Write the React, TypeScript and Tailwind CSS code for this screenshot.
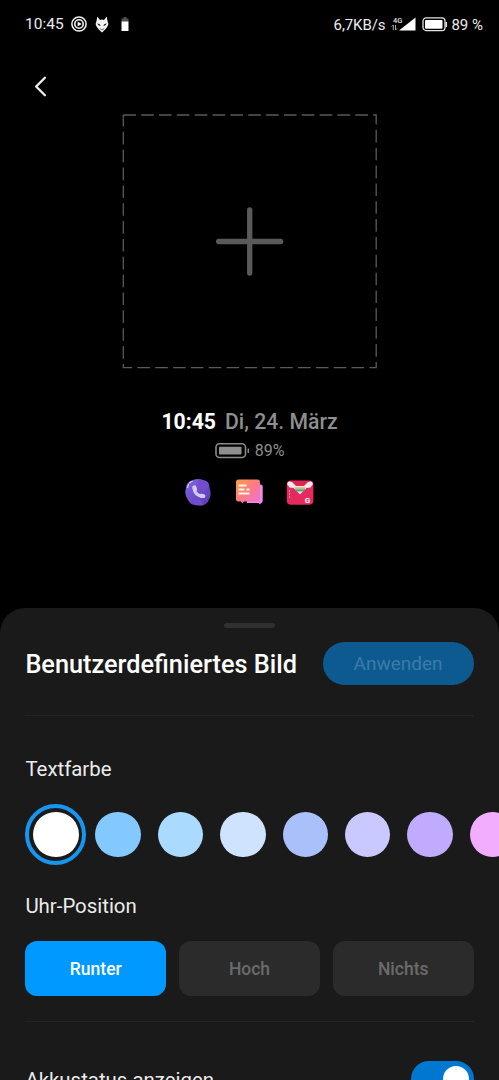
import React from "react";
import { ChevronLeft } from "lucide-react";

const colors = [
  "bg-[#83c9ff]",
  "bg-[#aadbff]",
  "bg-[#cfe3ff]",
  "bg-[#a9c0fb]",
  "bg-[#c9c8ff]",
  "bg-[#c0abfe]",
  "bg-[#f3adfe]",
];

const StatusBar = () => {
  return (
    <div className="flex h-12 items-center justify-between pl-[25px] pr-[16px] text-[15px] text-[#ececec]">
      <div className="flex items-center">
        <span className="w-[39px] pt-[2px] text-[15.500px]">10:45</span>
        <svg className="ml-[7px]" width="16" height="16" viewBox="0 0 16 16" fill="none" stroke="#f4f4f4">
          <circle cx="8" cy="8" r="7.1" strokeWidth="1.5" />
          <circle cx="8" cy="8" r="4.2" strokeWidth="1.6" />
          <path d="M6.6 5.5v5L10.7 8z" fill="#f4f4f4" stroke="none" />
        </svg>
        <svg className="ml-[8px]" width="14" height="17" viewBox="0 0 14 17">
          <path d="M2.300 .5 5 4Q7 3.200 9 4L11.700 .5 12.500 5 13.400 8Q12.500 12 7 16.500 1.500 12 .6 8L1.500 5z" fill="#f4f4f4" />
          <path d="M2.200 7.200Q5.100 7.600 5.900 10.300 3.200 10 2.200 7.200zM11.800 7.200Q8.900 7.600 8.100 10.300 10.800 10 11.800 7.200z" fill="#000" />
          <path d="M4.800 12.500 7 14 9.200 12.500" fill="none" stroke="#000" strokeWidth=".6" />
        </svg>
        <svg className="ml-[12px]" width="8" height="14" viewBox="0 0 8 14">
          <path d="M2.500 0h3v1.500H7.500V5H.5V1.500h2z" fill="#505050" />
          <path d="M.5 4.500h7V14h-7z" fill="#fff" />
        </svg>
      </div>
      <div className="flex items-center">
        <span className="pt-[2px] tracking-[-0.1px]">6,7KB/s</span>
        <svg className="ml-[6px]" width="25" height="16" viewBox="0 0 25 16">
          <text x="2" y="6.500" fontSize="7.500" fontFamily="Roboto" fontWeight="500" fill="#e0e0e0">4G</text>
          <path d="M2.300 14V9M.8 10.500 2.300 9M4.500 9v5M4.500 14 6 12.500" stroke="#aaa" strokeWidth="1" fill="none" />
          <path d="M24.500 1.500V14.500H8z" fill="#fff" />
        </svg>
        <svg className="ml-[6px]" width="26" height="15" viewBox="0 0 26 15">
          <rect x="1" y=".9" width="22" height="12.700" rx="3.200" fill="none" stroke="#e4e4e4" strokeWidth="1.300" />
          <rect x="3" y="3" width="17.500" height="8.700" rx="1" fill="#fff" />
          <path d="M24.300 5v5" stroke="#e4e4e4" strokeWidth="1.500" />
        </svg>
        <span className="ml-[3px] pt-[2px]">89 %</span>
      </div>
    </div>
  );
};

const ImagePicker = () => {
  return (
    <div className="flex justify-center">
      <svg width="256" height="256" viewBox="0 0 256 256" fill="none">
        <path d="M1.300 2H254.200V254.700H1.300V2" stroke="#5a5a5a" strokeWidth="1.300" strokeDasharray="12.600 5.250" />
        <path d="M127.700 97v63M96.700 128.500h62" stroke="#5a5a5a" strokeWidth="5.300" strokeLinecap="round" />
      </svg>
    </div>
  );
};

const AppIcons = () => {
  return (
    <div className="mt-[16px] flex justify-center gap-[23px] pr-[1px]">
      <svg width="28" height="28" viewBox="0 0 28 28">
        <defs>
          <linearGradient id="phone" x1="0" y1="0" x2="1" y2="1">
            <stop stopColor="#8067df" />
            <stop offset="1" stopColor="#5a38b3" />
          </linearGradient>
        </defs>
        <path d="M8 2.500Q14-.2 19 2 26 3 25.500 10 28 17 25 21.500 23 28 15 27.500 6 28 3.500 21 0 16 2 10 2 4 8 2.500z" fill="url(#phone)" />
        <path d="M14 2Q23 1 25 8L20 13 14 10zM10 21l7 1 2 5Q13 28 8 25z" fill="#744cce" />
        <path d="M3.500 10Q4 4.500 9 3" stroke="#cfc3ff" strokeWidth="1.300" fill="none" strokeDasharray="4 1" />
        <path d="M10.500 10Q10 13.500 12.800 16 15.500 18.500 19 18" stroke="#d3c8f7" strokeWidth="3.200" strokeLinecap="round" fill="none" />
        <path d="M10.300 9.500 11 11.500M17 17.800 19.300 18" stroke="#d3c8f7" strokeWidth="4.200" strokeLinecap="round" />
      </svg>
      <svg width="28" height="28" viewBox="0 0 28 28">
        <defs>
          <linearGradient id="message" x1="0" y1="0" x2="1" y2="1">
            <stop stopColor="#ff9c40" />
            <stop offset=".5" stopColor="#fb7b85" />
            <stop offset="1" stopColor="#ef70de" />
          </linearGradient>
        </defs>
        <path d="M12 6.500h13.500Q27.700 6.500 27.700 8.500V23Q27.700 25 26 25l-1 1.500-1.500-1.500H12z" fill="#ed8be6" />
        <path d="M3.500 1.500H22.500Q25 1.500 25 4V21Q25 23.500 22.500 23.500H9L7.500 25.500 6 23.500H3.500Q1 23.500 1 21V4Q1 1.500 3.500 1.500z" fill="url(#message)" />
        <path d="M3.500 7.500h8M3.500 11.500h6M11.500 11.500h3M3.500 15.500h11" stroke="#fff5e8" strokeWidth="2" />
      </svg>
      <svg width="28" height="28" viewBox="0 0 28 28">
        <rect x=".8" y="2.500" width="26.600" height="24" rx="4" fill="#e02458" />
        <path d="M1 7 14 17 27 7V22Q27 26.500 23 26.500H5Q1 26.500 1 22z" fill="#e62a5d" />
        <path d="M1 6Q2 2.500 6 4l4 4h8l4-4q4-1.500 5 2l-2.500 3.500-4 .5-6.500 6.500-6.500-6.500-4-.5z" fill="#f5e9ee" />
        <path d="M8 9.300h12l-1.500 1.700h-9z" fill="#efb44c" />
        <path d="M8 11.200h12l-2.200 2.300h-7.600z" fill="#43a79e" />
        <path d="M3.500 12v9" stroke="#ff8da9" strokeWidth="1" strokeDasharray="2 1" />
        <text x="18.800" y="24.500" fontSize="8" fontFamily="Roboto" fontWeight="700" fill="#fff">G</text>
      </svg>
    </div>
  );
};

const Position = ({ label, active }: { label: string; active?: boolean }) => {
  return (
    <button
      className={
        active
          ? "h-[55px] flex-1 rounded-[12px] bg-[#0099ff] pt-[2px] text-[17.500px] font-medium text-white"
          : "h-[55px] flex-1 rounded-[12px] bg-[#2b2b2b] pt-[2px] text-[17.500px] font-medium text-[#6b6b6b]"
      }
    >
      {label}
    </button>
  );
};

const App = () => {
  return (
    <div className="flex h-[1080px] w-[499px] flex-col overflow-hidden bg-black font-[Roboto,sans-serif] text-white">
      <StatusBar />
      <div className="h-[65px] pl-[23px] pt-[21px]">
        <ChevronLeft size={35} strokeWidth={1.600} color="#eeeeee" />
      </div>
      <ImagePicker />
      <div className="mt-[38px] flex h-[30px] items-center justify-center gap-[9px] text-[21.200px] leading-[30px]">
        <span className="font-bold">10:45</span>
        <span className="font-medium text-[#8e8e8e]">Di, 24. März</span>
      </div>
      <div className="mt-[3px] flex h-[22px] items-center justify-center text-[16px] text-[#8e8e8e]">
        <svg width="35" height="16" viewBox="0 0 35 16">
          <rect x="1" y=".8" width="29.500" height="13.700" rx="3.500" fill="none" stroke="#8a8a8a" strokeWidth="1.600" />
          <rect x="4" y="3.800" width="22.500" height="7.700" rx=".8" fill="#8f8f8f" />
          <path d="M33.300 5.500v4.500" stroke="#8a8a8a" strokeWidth="1.500" />
        </svg>
        <span className="ml-[5px]">89%</span>
      </div>
      <AppIcons />
      <div className="mt-[102px] h-[472px] shrink-0 rounded-t-[25px] bg-[#1a1a1a] pl-[25.400px] pr-[25.400px]">
        <div className="flex h-[34px] justify-center pt-[15px]">
          <div className="h-[5px] w-[51px] rounded-full bg-[#303030]" />
        </div>
        <div className="flex h-[43px] items-center justify-between">
          <h1 className="whitespace-nowrap pt-[2px] text-[25.300px] font-medium">Benutzerdefiniertes Bild</h1>
          <button className="h-[43px] w-[151px] shrink-0 rounded-full bg-[#0d5a91] pt-[2px] text-[19px] text-[#3c7ba9]">Anwenden</button>
        </div>
        <div className="mt-[30px] border-b border-[#242424]" />
        <p className="mt-[38px] text-[20.400px] leading-[30px] text-[#ececec]">Textfarbe</p>
        <div className="mt-[20px] flex w-[500px] items-center">
          <div className="flex h-[61px] w-[61px] items-center justify-center rounded-full border-4 border-[#1696f0]">
            <div className="h-[45.500px] w-[45.500px] rounded-full bg-white" />
          </div>
          <div className="ml-[9px] flex gap-[16.900px]">
            {colors.map((color) => (
              <div key={color} className={`h-[45.500px] w-[45.500px] shrink-0 rounded-full ${color}`} />
            ))}
          </div>
        </div>
        <p className="mt-[26px] text-[20.400px] leading-[30px] text-[#ececec]">Uhr-Position</p>
        <div className="mt-[20px] flex gap-[13px]">
          <Position label="Runter" active />
          <Position label="Hoch" />
          <Position label="Nichts" />
        </div>
        <div className="mt-[25px] border-b border-[#242424]" />
        <div className="mt-[39px] flex items-start justify-between">
          <p className="mt-[4px] text-[20.400px] leading-[30px] text-[#ececec]">Akkustatus anzeigen</p>
          <div className="flex h-[36px] w-[63px] items-center justify-end rounded-full bg-[#0077d1] pr-[5px]">
            <div className="h-[26px] w-[26px] rounded-full bg-white" />
          </div>
        </div>
      </div>
    </div>
  );
};

export default App;
